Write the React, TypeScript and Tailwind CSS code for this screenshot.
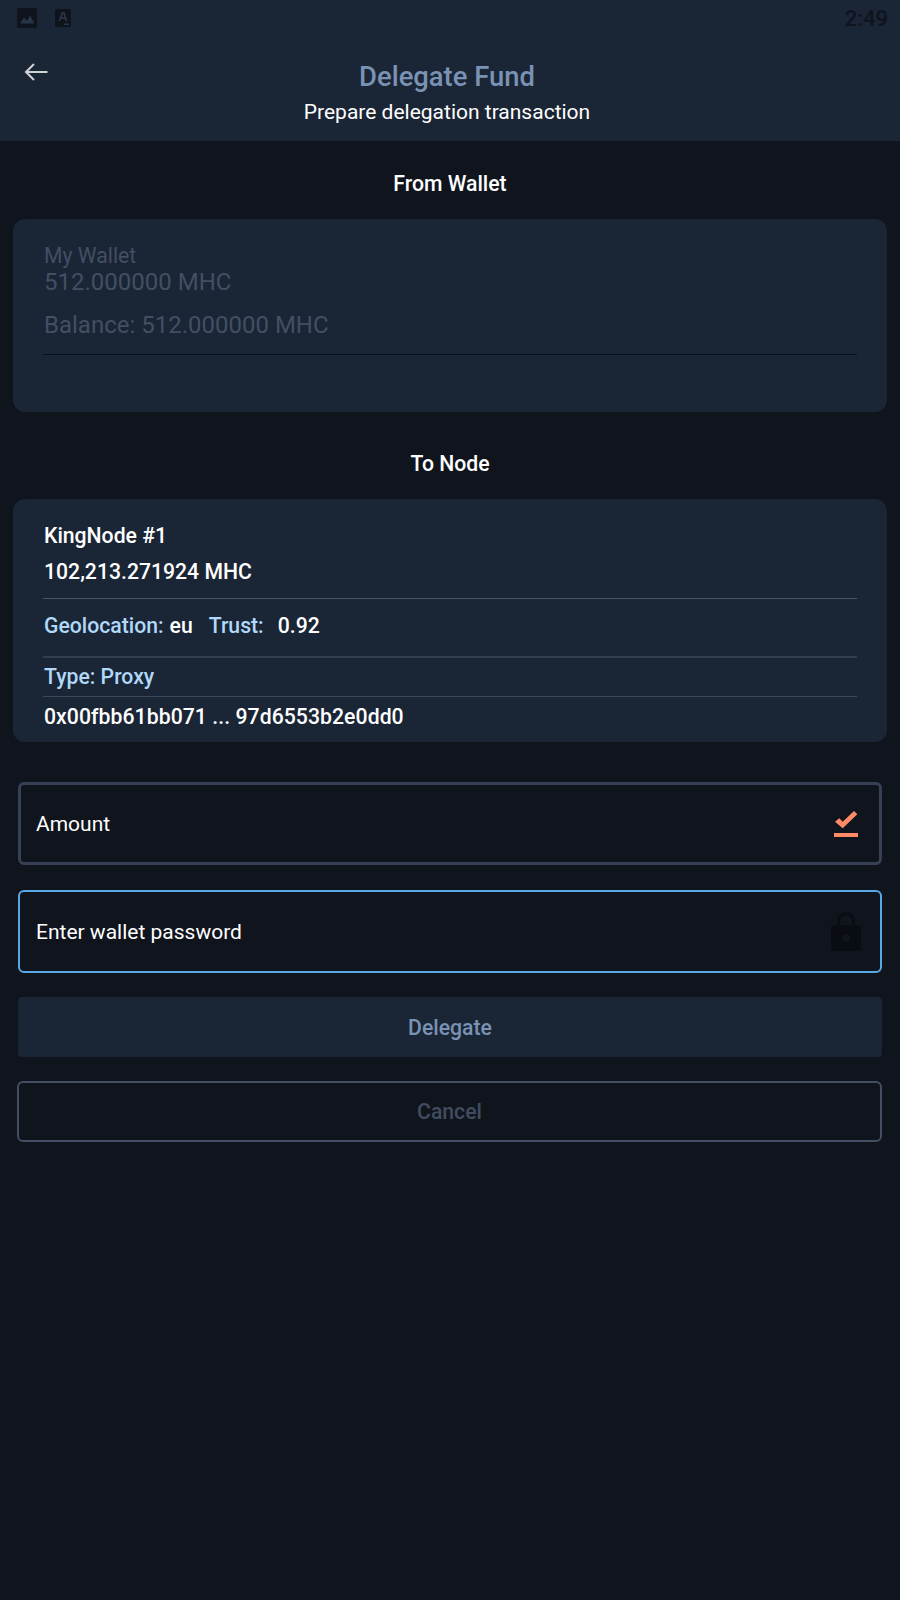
const font = { fontFamily: '"Roboto", sans-serif' };

function StatusIcons() {
  return (
    <div className="flex items-start gap-[18px]">
      <svg width="20" height="20" viewBox="0 0 20 20">
        <rect x="0" y="0" width="20" height="20" rx="2" fill="#0e131c" />
        <path d="M3 15.500l4-6 3 3.500 3-5.500 4.500 8z" fill="#27344a" />
      </svg>
      <svg width="16" height="18" viewBox="0 0 16 18" className="mt-[1px]">
        <rect x="0" y="0" width="16" height="18" rx="2" fill="#0e131c" />
        <path fillRule="evenodd" d="M6.500 3h3l3 9h-2l-.6-2H6.100l-.6 2h-2zM6.700 8.200h2.600L8 4.500z" fill="#27344a" />
        <rect x="9" y="14.500" width="5" height="1.500" fill="#27344a" />
      </svg>
    </div>
  );
}

function Divider({ className }: { className: string }) {
  return <div className={className} />;
}

export default function App() {
  return (
    <div style={font} className="min-h-[1600px] w-[900px] bg-[#10141d] text-white">
      <header className="relative h-[141px] bg-[#1a2535]">
        <div className="flex h-[38px] items-start justify-between pl-[17px] pr-[12px] pt-[8px]">
          <StatusIcons />
          <span className="mt-[1px] text-[22px] font-medium leading-[20px] text-[#0e131c]">2:49</span>
        </div>
        <svg width="24" height="18" viewBox="0 0 24 18" fill="none" stroke="#cfd2d6" strokeWidth="2" className="absolute left-[24px] top-[63px]">
          <path d="M2 9H23.500M10 1L2 9l8 8" />
        </svg>
        <div className="flex flex-col items-center pr-[6px] pt-[22px]">
          <h1 className="text-[27.400px] font-medium leading-[34px] text-[#7a92b3]">Delegate Fund</h1>
          <p className="mt-[4px] text-[21px] leading-[28px]">Prepare delegation transaction</p>
        </div>
      </header>

      <main className="px-[13px]">
        <h2 className="pt-[30px] text-center text-[21.200px] font-medium leading-[26px]">From Wallet</h2>
        <section className="mt-[22px] h-[193px] rounded-[12px] bg-[#1a2535] px-[30px] pt-[25px] text-[#434f63]">
          <p className="pl-[1px] text-[21.200px] leading-[24px]">My Wallet</p>
          <p className="pl-[1px] text-[24px] leading-[28px]">512.000000 MHC</p>
          <p className="mt-[15px] pl-[1px] text-[24px] leading-[28px]">Balance: 512.000000 MHC</p>
          <Divider className="mt-[15px] h-[1px] bg-[#0b0e14]" />
        </section>

        <h2 className="mt-[39px] text-center text-[21.200px] font-medium leading-[26px]">To Node</h2>
        <section className="mt-[22px] h-[243px] rounded-[12px] bg-[#1a2535] px-[30px] pt-[24px] text-[21.200px] font-medium">
          <p className="pl-[1px] leading-[26px]">KingNode #1</p>
          <p className="mt-[10px] pl-[1px] leading-[26px]">102,213.271924 MHC</p>
          <Divider className="mt-[13px] h-[1px] bg-[#4a5567]" />
          <p className="mt-[14px] flex pl-[1px] leading-[26px]">
            <span className="text-[#b0d8f8]">Geolocation:</span>
            <span className="ml-[6px]">eu</span>
            <span className="ml-[16px] text-[#b0d8f8]">Trust:</span>
            <span className="ml-[14px]">0.92</span>
          </p>
          <Divider className="mt-[17px] h-[2px] bg-[#333e50]" />
          <p className="mt-[6px] pl-[1px] leading-[26px] text-[#b0d8f8]">Type: Proxy</p>
          <Divider className="mt-[6px] h-[1px] bg-[#3c4759]" />
          <p className="mt-[7px] pl-[1px] leading-[26px] tracking-[0.06px]">0x00fbb61bb071 ... 97d6553b2e0dd0</p>
        </section>

        <div className="mx-[5px] mt-[40px] flex h-[83px] items-center justify-between rounded-[6px] border-[3px] border-[#364155] pl-[15px] pr-[21px] text-[21px]">
          <span className="pt-[2px]">Amount</span>
          <svg width="24" height="26" viewBox="0 0 24 26" fill="#ff8a65">
            <path d="M1 10.700L5.300 7.300L8.700 10.700L20 0L23.300 3.300L8.700 17.300z" />
            <rect x="0" y="22" width="24" height="4" />
          </svg>
        </div>
        <div className="mx-[5px] mt-[25px] flex h-[83px] items-center justify-between rounded-[6px] border-2 border-[#5aa7e6] pl-[16px] pr-[19px] text-[21px]">
          <span className="pt-[2px]">Enter wallet password</span>
          <svg width="30" height="39" viewBox="0 0 30 39" className="mt-[-1px]">
            <path fill="#090c12" d="M15 0a9 9 0 0 0-9 9v4H3a3 3 0 0 0-3 3v20a3 3 0 0 0 3 3h24a3 3 0 0 0 3-3V16a3 3 0 0 0-3-3h-3V9a9 9 0 0 0-9-9zm-6 13V9a6 6 0 0 1 12 0v4zm6 9a4 4 0 1 1 0 8 4 4 0 0 1 0-8z" fillRule="evenodd" />
          </svg>
        </div>

        <button className="mx-[5px] mt-[24px] block h-[60px] w-[864px] rounded-[4px] bg-[#1a2535] pt-[2px] text-[21.200px] font-medium text-[#7a92b3]">Delegate</button>
        <button className="ml-[4px] mt-[24px] block h-[61px] w-[865px] rounded-[6px] border-2 border-[#434e62] text-[21.200px] font-medium text-[#414c60]">Cancel</button>
      </main>
    </div>
  );
}
